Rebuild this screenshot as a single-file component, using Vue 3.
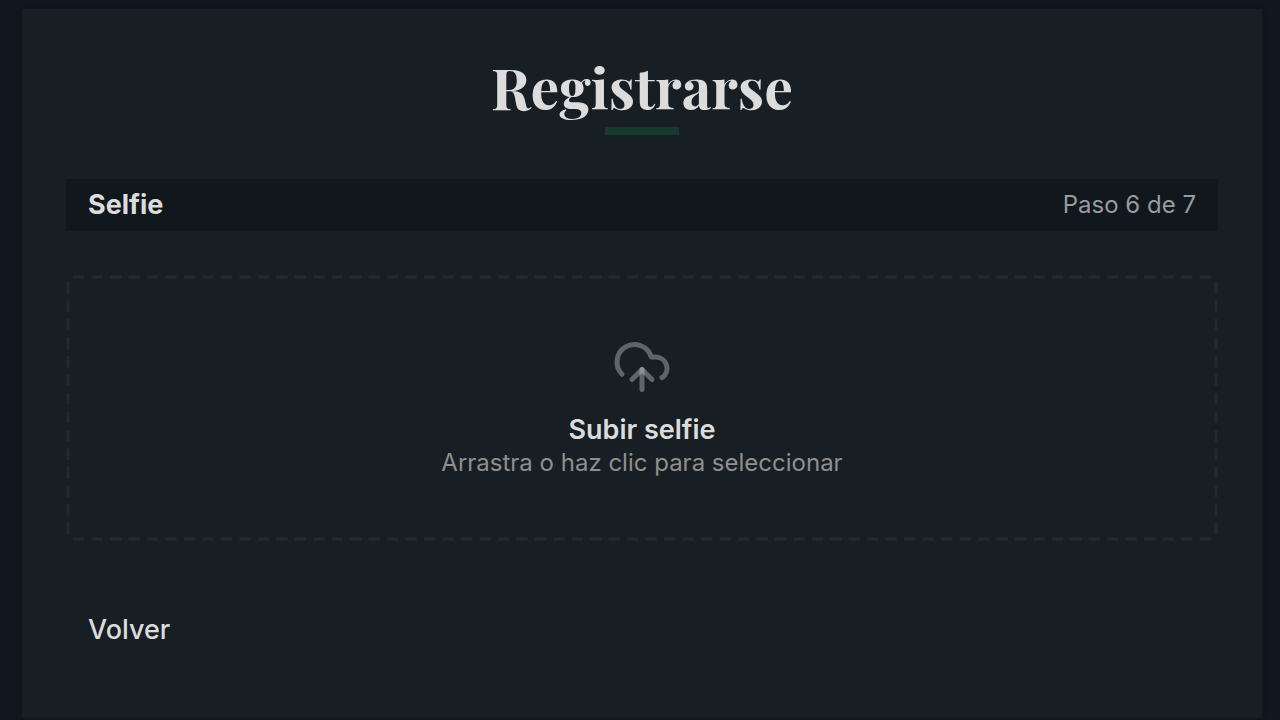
<script setup>
import { ref } from 'vue'

const step = ref(6)
const total = 7
</script>

<template>
  <main class="page">
    <section class="card">
      <h1 class="title">Registrarse</h1>

      <header class="step">
        <h2 class="step-name">Selfie</h2>
        <span class="step-count">Paso {{ step }} de {{ total }}</span>
      </header>

      <label class="dropzone" for="selfie">
        <svg class="outline" aria-hidden="true">
          <svg class="edge-x" x="7" y="0">
            <line x1="0" y1="2" x2="100%" y2="2" pathLength="493" />
          </svg>
          <svg class="edge-x" x="7" y="100%">
            <line x1="0" y1="-2" x2="100%" y2="-2" pathLength="493" />
          </svg>
          <svg class="edge-y" x="0" y="7">
            <line x1="2" y1="0" x2="2" y2="100%" pathLength="109" />
          </svg>
          <svg class="edge-y" x="100%" y="7">
            <line x1="-2" y1="0" x2="-2" y2="100%" pathLength="109" />
          </svg>
        </svg>
        <svg class="icon" viewBox="0 0 24 24" aria-hidden="true">
          <path d="M12 13v8" />
          <path d="M4 14.899A7 7 0 1 1 15.71 8h1.79a4.5 4.5 0 0 1 2.5 8.242" />
          <path d="m8 17 4-4 4 4" />
        </svg>
        <span class="drop-title">Subir selfie</span>
        <span class="drop-hint">Arrastra o haz clic para seleccionar</span>
        <input id="selfie" class="file" type="file" accept="image/*" />
      </label>

      <button class="back" type="button">Volver</button>
    </section>
  </main>
</template>

<style>
body {
  background: #10171e;
}
</style>

<style scoped>
.page {
  box-sizing: border-box;
  display: flex;
  min-height: 100vh;
  padding: 9px 18px 2px 22px;
  background: #10171e;
  color: #dcdcdc;
  font-family: Inter, "Liberation Sans", sans-serif;
}

.card {
  box-sizing: border-box;
  flex: 1;
  min-width: 0;
  padding: 44px 44px 56px;
  background: #171e24;
  box-shadow: 0 0 4px #10181b;
}

.title {
  display: flex;
  flex-direction: column;
  align-items: center;
  margin: 0 0 44px;
  font-family: "Playfair Display", "Liberation Serif", serif;
  font-size: 57px;
  font-weight: 700;
  line-height: 66px;
}

.title::after {
  content: "";
  width: 74px;
  height: 8px;
  margin-top: 8px;
  background: #18392f;
}

.step {
  display: flex;
  align-items: center;
  justify-content: space-between;
  padding: 0 22px;
  background: #10171d;
}

.step-name {
  margin: 0;
  font-size: 27px;
  font-weight: 700;
  line-height: 52px;
}

.step-count {
  color: #989b9d;
  font-size: 24px;
  line-height: 52px;
}

.dropzone {
  position: relative;
  display: flex;
  flex-direction: column;
  align-items: center;
  margin-top: 44px;
  padding: 62px 22px;
  cursor: pointer;
}

.outline {
  position: absolute;
  inset: 0;
  width: 100%;
  height: 100%;
}

.edge-x {
  width: calc(100% - 14px);
  overflow: visible;
}

.edge-y {
  height: calc(100% - 14px);
  overflow: visible;
}

.outline line {
  stroke: #282828;
  stroke-width: 3px;
  stroke-dasharray: 5 3;
}

.icon {
  width: 60px;
  height: 60px;
  margin-bottom: 16px;
  fill: none;
  stroke: rgba(222, 222, 222, 0.37);
  stroke-width: 2;
  stroke-linecap: round;
  stroke-linejoin: round;
}

.drop-title {
  font-size: 27px;
  font-weight: 600;
  line-height: 34px;
}

.drop-hint {
  color: #8f8f8d;
  font-size: 24px;
  line-height: 32px;
}

.file {
  position: absolute;
  width: 1px;
  height: 1px;
  opacity: 0;
}

.back {
  margin-top: 63px;
  padding: 0 22px;
  border: 0;
  background: none;
  color: inherit;
  font: 500 27px/52px Inter, "Liberation Sans", sans-serif;
  cursor: pointer;
}
</style>
